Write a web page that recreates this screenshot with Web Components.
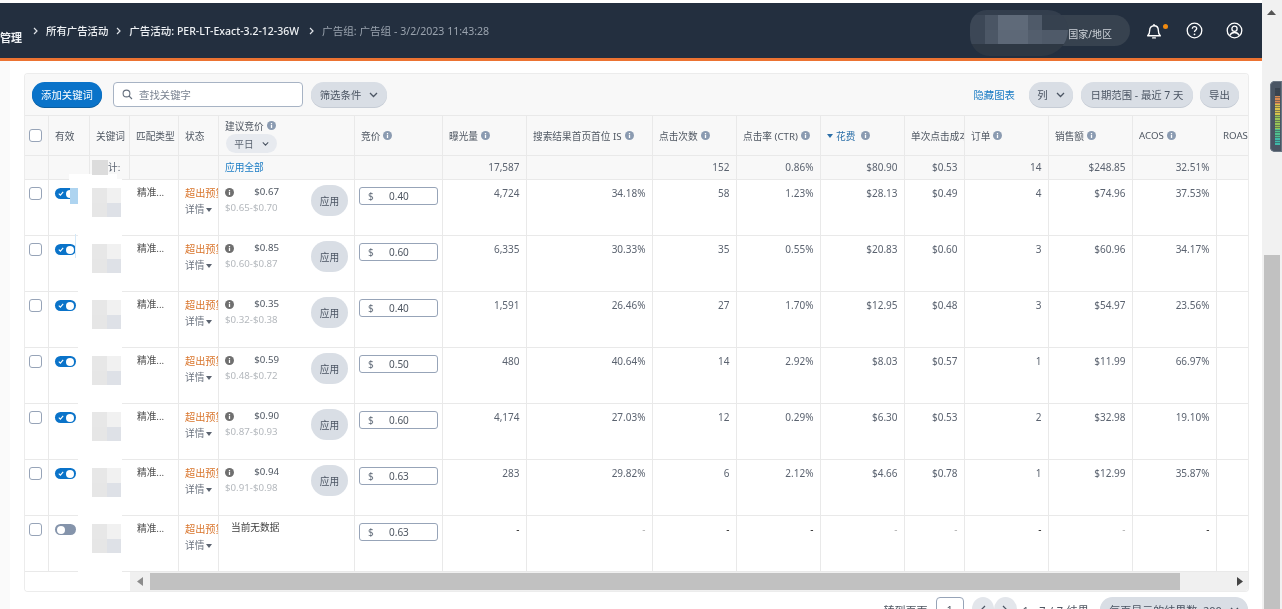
<!DOCTYPE html>
<html lang="zh"><head><meta charset="utf-8"><title>广告组</title>
<style>
html,body{margin:0;height:609px;overflow:hidden;background:#fff}
body{font:10px "Noto Sans","Noto Sans CJK SC",sans-serif;color:#555}
</style></head>
<body>
<app-shell>
  <top-bar></top-bar>
  <keyword-card></keyword-card>
  <pager-bar></pager-bar>
</app-shell>
<script>
const COLS='24px 41px 40px 49px 40px 136px 88px 84px 126px 84px 84px 84px 60px 84px 84px 84px 31px';
const INFO=(c='#8b9bb1',s=9)=>`<svg width="${s}" height="${s}" viewBox="0 0 10 10" style="flex:none"><circle cx="5" cy="5" r="5" fill="${c}"/><rect x="4.3" y="4.2" width="1.4" height="3.6" fill="#fff"/><rect x="4.3" y="2.2" width="1.4" height="1.3" fill="#fff"/></svg>`;
const CHEV=`<svg width="9" height="6" viewBox="0 0 9 6"><path d="M1 1l3.5 3.5L8 1" fill="none" stroke="#4b5563" stroke-width="1.3"/></svg>`;

class PillButton extends HTMLElement{constructor(){super();this.attachShadow({mode:'open'}).innerHTML=`<style>
:host{display:inline-flex;align-items:center;justify-content:center;gap:8px;height:25px;box-sizing:border-box;border-radius:13px;background:#d9dee5;color:#4b5563;font-size:10.4px;white-space:nowrap;box-shadow:0 1px 0 #c6ccd5}
:host([primary]){background:#0a73c9;color:#fff;box-shadow:0 1px 0 #0a5d9f}
</style><slot></slot>${this.hasAttribute('chev')?CHEV:''}`}}
customElements.define('pill-button',PillButton);

class ToggleSwitch extends HTMLElement{constructor(){super();const on=this.hasAttribute('on');this.attachShadow({mode:'open'}).innerHTML=`<style>
:host{display:flex;width:21px;height:11px;border-radius:6px;background:${on?'#0a73c9':'#8594ab'};box-sizing:border-box;padding:1.5px 2px;align-items:center;justify-content:${on?'flex-end':'flex-start'};position:relative;gap:0}
i{display:block;width:8px;height:8px;border-radius:50%;background:#fff}
svg{position:absolute;left:3px;top:3px}
</style>${on?'<svg width="6" height="5" viewBox="0 0 6 5"><path d="M.8 2.6l1.6 1.5L5.2.9" fill="none" stroke="#fff" stroke-width="1.1"/></svg>':''}<i></i>`}}
customElements.define('toggle-switch',ToggleSwitch);

class CheckBox extends HTMLElement{constructor(){super();this.attachShadow({mode:'open'}).innerHTML=`<style>:host{display:block;width:13px;height:13px;box-sizing:border-box;border:1px solid #97a4b8;border-radius:3px;background:#fff}</style>`}}
customElements.define('check-box',CheckBox);

class RedactBlob extends HTMLElement{constructor(){super();this.attachShadow({mode:'open'}).innerHTML=`<style>
:host{position:absolute;left:-12px;top:-1px;width:44px;height:57px;background:#fff;display:block}
div{position:absolute;left:14px;top:9px;width:29px;height:29px;display:grid;grid-template:1fr 1fr/1fr 1fr}
b:nth-child(1){background:#e7e7e7}b:nth-child(2){background:#f1f1f1}b:nth-child(3){background:#e6e6e6}b:nth-child(4){background:#dee1e7}
</style><div><b></b><b></b><b></b><b></b></div>`}}
customElements.define('redact-blob',RedactBlob);

const SEP=`<span class="s"><svg width="5" height="8" viewBox="0 0 5 8"><path d="M1 1l3 3-3 3" fill="none" stroke="#dfe3e8" stroke-width="1.2"/></svg></span>`;
const BLOB=[
'#333e4d','#333e4d','#333e4d','#333e4d','#333e4d',
'#3c4756','#4a5564','#5f6a79','#4f5a69','#36414f',
'#3c4756','#4c5766','#5d6877','#535e6d','#4f5a69',
'#2e3844','#2e3844','#2e3844','#2e3844','#2e3844'];
class TopBar extends HTMLElement{constructor(){super();this.attachShadow({mode:'open'}).innerHTML=`<style>
:host{display:flex;align-items:center;height:55px;margin-top:3px;background:#232f3f;border-bottom:3px solid #ec7332;color:#eef1f4;font-size:10.4px;font-weight:500;position:relative;white-space:nowrap}
.crumbs{display:flex;align-items:center;flex:none;height:100%}
.mg{font-size:11px;width:33px;padding-top:13px;font-weight:600}
.s{width:13px;display:flex}
.c{margin-right:8px}
.c2{margin-right:10px;font-size:10.5px}
.g{color:#9aa3ae;font-weight:400;font-size:10.6px}
.right{margin-left:auto;display:flex;align-items:center;height:100%}
.pill{display:flex;align-items:center;justify-content:flex-end;width:130px;height:31px;border-radius:16px;background:#37424f;box-sizing:border-box;padding:6px 18px 0 0;color:#cfd4da;font-size:10px;font-weight:400;margin-right:4px}
.ic{width:40px;display:flex;justify-content:center;position:relative}
.dot{position:absolute;left:29px;top:2px;width:5px;height:5px;border-radius:50%;background:#f08a10}
svg{display:block}
.blob{position:absolute;left:970px;top:7px;width:98px;height:46px;border-radius:22px 26px 34px 26px;overflow:hidden;display:grid;grid-template-columns:15px 13px 30px 14px 26px;grid-template-rows:5px 15px 14px 12px}
</style>
<div class="crumbs"><span class="mg">管理</span>
${SEP}<span class="c">所有广告活动</span>
${SEP}<span class="c c2">广告活动: PER-LT-Exact-3.2-12-36W</span>
${SEP}<span class="c g">广告组: 广告组 - 3/2/2023 11:43:28</span></div>
<div class="right">
<div class="pill">国家/地区</div>
<div class="ic"><svg width="18" height="18" viewBox="0 0 17 17"><path d="M2.500 13c1.400-1 1.900-2.200 1.900-5 0-2.600 1.700-4.500 4.100-4.500s4.100 1.900 4.100 4.500c0 2.800.5 4 1.900 5z" fill="none" stroke="#fff" stroke-width="1.300" stroke-linejoin="round"/><path d="M7.200 15h2.600" stroke="#fff" stroke-width="1.300" stroke-linecap="round"/><path d="M8.500 1.800v1.700" stroke="#fff" stroke-width="1.300"/></svg><span class="dot"></span></div>
<div class="ic"><svg width="17" height="17" viewBox="0 0 17 17"><circle cx="8.500" cy="8.500" r="7.300" fill="none" stroke="#fff" stroke-width="1.300"/><path d="M6.300 6.700c0-1.300 1-2.100 2.200-2.100s2.200.8 2.200 2c0 1.700-2.200 1.700-2.200 3.500" fill="none" stroke="#fff" stroke-width="1.300"/><circle cx="8.500" cy="12.300" r=".9" fill="#fff"/></svg></div>
<div class="ic"><svg width="17" height="17" viewBox="0 0 17 17"><circle cx="8.500" cy="8.500" r="7.300" fill="none" stroke="#fff" stroke-width="1.300"/><circle cx="8.500" cy="6.800" r="2.600" fill="none" stroke="#fff" stroke-width="1.300"/><path d="M3.800 13.500c.8-2 2.600-3 4.700-3s3.900 1 4.700 3" fill="none" stroke="#fff" stroke-width="1.300"/></svg></div>
<div style="width:8px"></div>
</div>
<div class="blob">${BLOB.map(c=>`<i style="background:${c}"></i>`).join('')}</div>`}}
customElements.define('top-bar',TopBar);

class KwToolbar extends HTMLElement{constructor(){super();this.attachShadow({mode:'open'}).innerHTML=`<style>
:host{display:flex;align-items:center;height:42px;padding:0 9px 0 7px;box-sizing:border-box;background:#f8f8f8;border-bottom:1px solid #e9e9e9}
.s{width:190px;height:25px;margin-left:11px;box-sizing:border-box;border:1px solid #a7b3c4;border-radius:4px;background:#fff;display:flex;align-items:center;padding-left:8px;gap:6px;color:#7a8391;font-size:10.4px}
.hide{margin-left:auto;color:#1b7cc4;font-size:10.4px;margin-right:14px}
</style>
<pill-button primary style="width:70px">添加关键词</pill-button>
<div class="s"><svg width="11" height="11" viewBox="0 0 11 11"><circle cx="4.500" cy="4.500" r="3.400" fill="none" stroke="#66707e" stroke-width="1.100"/><path d="M7 7l3 3" stroke="#66707e" stroke-width="1.100"/></svg>查找关键字</div>
<pill-button chev style="width:76px;margin-left:8px">筛选条件</pill-button>
<span class="hide">隐藏图表</span>
<pill-button chev style="width:44px">列</pill-button>
<pill-button style="width:112px;margin-left:8px">日期范围 - 最近 7 天</pill-button>
<pill-button style="width:39px;margin-left:7px">导出</pill-button>`}}
customElements.define('kw-toolbar',KwToolbar);

const BASE=`:host{display:grid;grid-template-columns:${COLS};box-sizing:border-box;border-bottom:1px solid #e9e9e9}
.c{border-right:1px solid #e9e9e9;box-sizing:border-box;overflow:hidden;white-space:nowrap;position:relative;min-width:0}
.c:last-child{border-right:0}
.r{text-align:right;padding:0 6.5px 0 0;font-size:10px}`;

class KwHeader extends HTMLElement{constructor(){super();
const h=(t)=>`<div class="c h"><span>${t}</span>${INFO()}</div>`;
this.attachShadow({mode:'open'}).innerHTML=`<style>${BASE}
:host{height:40px;background:#f8f8f8;font-size:9.7px;color:#4f5762}
.h{display:flex;align-items:center;gap:3px;padding-left:6px}
.cb{padding:13px 0 0 4px}
.sug{display:block;padding:2px 0 0 6px}
.sug div{display:flex;align-items:center;gap:3px;height:15px}
.sug .pick{width:51px;height:19px;margin:1px 0 0 1px;border-radius:10px;background:#e7eaef;justify-content:center;gap:8px;color:#5b6572}
.pick svg{width:7px}
.sort{color:#2c6fa8}
.sort svg:last-child{margin-left:3px}
</style>
<div class="c cb"><check-box></check-box></div>
<div class="c h">有效</div><div class="c h">关键词</div><div class="c h">匹配类型</div><div class="c h">状态</div>
<div class="c sug"><div>建议竞价 ${INFO()}</div><div class="pick">平日 ${CHEV}</div></div>
${h('竞价')}${h('曝光量')}${h('搜索结果首页首位 IS')}${h('点击次数')}${h('点击率 (CTR)')}
<div class="c h sort"><svg width="6" height="4" viewBox="0 0 6 4"><path d="M0 0h6L3 4z" fill="#2c6fa8"/></svg><span>花费</span>${INFO()}</div>
<div class="c h">单次点击成本</div>${h('订单')}${h('销售额')}${h('ACOS')}<div class="c h">ROAS</div>`}}
customElements.define('kw-header',KwHeader);

class KwTotal extends HTMLElement{constructor(){super();
const v=['17,587','','152','0.86%','$80.90','$0.53','14','$248.85','32.51%',''];
this.attachShadow({mode:'open'}).innerHTML=`<style>${BASE}
:host{height:24px;background:#f8f8f8;font-size:9.7px;color:#5b6370;line-height:23px}
.k{padding-left:18px;overflow:visible}
.k b{font-weight:400}
.bl{position:absolute;left:2px;top:4px;width:16px;height:15px;background:#dcdcdc}
.w{position:absolute;left:-21px;top:18px;width:48px;height:6px;background:#fff}
a{color:#1b7cc4;padding-left:6px}
</style>
<div class="c"></div><div class="c"></div>
<div class="c k"><span class="w"></span><span class="bl"></span><b>计:</b></div>
<div class="c"></div><div class="c"></div><div class="c"><a>应用全部</a></div><div class="c"></div>
${v.map(x=>`<div class="c r">${x}</div>`).join('')}`}}
customElements.define('kw-total',KwTotal);

class KwRow extends HTMLElement{constructor(){super();
const a=n=>this.getAttribute(n);
const vals=a('vals').split('|');
const on=this.hasAttribute('on');
const tint=a('tint');
const sug=a('sug')?`<div class="sg"><span class="in">${INFO('#6f6f6f',9)}<b>${a('sug')}</b></span><span class="rg">${a('range')}</span><pill-button class="ap">应用</pill-button></div>`:`<div class="nd">当前无数据</div>`;
this.attachShadow({mode:'open'}).innerHTML=`<style>${BASE}
:host{height:56px;background:#fff;font-size:9.7px;color:#5b6370}
.cb{padding:7px 0 0 4px}
.tg{padding:8px 0 0 6px;overflow:visible;z-index:0}
.k{overflow:visible;z-index:1;border-right-color:transparent}
.m{padding:6px 0 0 7px;color:#4d4d4d;line-height:14px}
.st{padding:6px 0 0 6px;line-height:14px;color:#d9752c;font-size:10.2px}
.st div{color:#6c7480;margin-top:3px;display:flex;align-items:center;gap:2px;font-size:9.7px}
.sg{position:relative;height:55px}
.in{position:absolute;left:6px;top:6px;width:54px;display:flex;justify-content:space-between;align-items:center;color:#4f5762;line-height:12px}
.in b{font-weight:400}
.rg{position:absolute;left:6px;top:22px;color:#b4b8bd;line-height:12px}
.ap{position:absolute;left:92px;top:5px;width:37px;height:31px;border-radius:16px;box-shadow:none;font-size:9.7px}
.nd{padding:6px 0 0 12px;color:#3f3f3f;line-height:12px}
.bid{margin:7px 0 0 4px;width:79px;height:18px;box-sizing:border-box;border:1px solid #97a4b8;border-radius:3px;background:#fff;display:flex;align-items:center;padding-left:8px;color:#4f5762;font-size:10px}
.bid span{width:21px;color:#67717e}
.r{line-height:14px;padding-top:6px}
.lite{color:#b0b0b0}
.dark{color:#222}
.blue{position:absolute;left:21px;top:8px;width:8px;height:16px;background:#aed4f0}
.blue.t{left:26px;width:1px;top:-2px;height:24px;background:#d4e8f7}
</style>
<div class="c cb"><check-box></check-box></div>
<div class="c tg"><toggle-switch ${on?'on':''}></toggle-switch>${tint==='1'?'<span class="blue"></span>':tint==='2'?'<span class="blue t"></span>':''}</div>
<div class="c k"><redact-blob></redact-blob></div>
<div class="c m">精准...</div>
<div class="c st">超出预算<div>详情<svg width="6" height="4" viewBox="0 0 6 4"><path d="M0 0h6L3 4z" fill="#5b6370"/></svg></div></div>
<div class="c">${sug}</div>
<div class="c"><div class="bid"><span>$</span>${a('bid')}</div></div>
${vals.map((x,i)=>`<div class="c r ${x==='-'?([0,2,3,6,8].includes(i)?'dark':'lite'):''}">${x}</div>`).join('')}<div class="c"></div>`}}
customElements.define('kw-row',KwRow);

class HScroll extends HTMLElement{constructor(){super();this.attachShadow({mode:'open'}).innerHTML=`<style>
:host{display:grid;grid-template-columns:105px 1fr;height:19px;background:#fff}
.t{background:#f0f0f0;position:relative}
.th{position:absolute;left:20px;top:1px;bottom:1px;width:1030px;background:#c1c1c1}
svg{position:absolute;top:5px}
</style><div></div><div class="t"><svg style="left:7px" width="6" height="9" viewBox="0 0 6 9"><path d="M6 0v9L0 4.500z" fill="#8c8c8c"/></svg><div class="th"></div><svg style="right:5px" width="6" height="9" viewBox="0 0 6 9"><path d="M0 0v9l6-4.500z" fill="#444"/></svg></div>`}}
customElements.define('h-scroll',HScroll);

class KeywordCard extends HTMLElement{constructor(){super();
const rows=[
['0.67','$0.65-$0.70','0.40','4,724|34.18%|58|1.23%|$28.13|$0.49|4|$74.96|37.53%',1,1],
['0.85','$0.60-$0.87','0.60','6,335|30.33%|35|0.55%|$20.83|$0.60|3|$60.96|34.17%',1,2],
['0.35','$0.32-$0.38','0.40','1,591|26.46%|27|1.70%|$12.95|$0.48|3|$54.97|23.56%',1,0],
['0.59','$0.48-$0.72','0.50','480|40.64%|14|2.92%|$8.03|$0.57|1|$11.99|66.97%',1,0],
['0.90','$0.87-$0.93','0.60','4,174|27.03%|12|0.29%|$6.30|$0.53|2|$32.98|19.10%',1,0],
['0.94','$0.91-$0.98','0.63','283|29.82%|6|2.12%|$4.66|$0.78|1|$12.99|35.87%',1,0],
['','','0.63','-|-|-|-|-|-|-|-|-',0,0]];
this.attachShadow({mode:'open'}).innerHTML=`<style>
:host{display:block;width:1223px;margin:13px 0 0 25px;box-sizing:border-box;height:517px;box-shadow:0 0 0 1px #ececec;border-radius:3px;overflow:hidden;background:#fff}
</style><kw-toolbar></kw-toolbar><kw-header></kw-header><kw-total></kw-total>
${rows.map(r=>`<kw-row ${r[4]?'on':''} tint="${r[5]}" ${r[0]?`sug="$${r[0]}" range="${r[1]}"`:''} bid="${r[2]}" vals="${r[3]}"></kw-row>`).join('')}
<h-scroll></h-scroll>`}}
customElements.define('keyword-card',KeywordCard);

class PagerBar extends HTMLElement{constructor(){super();this.attachShadow({mode:'open'}).innerHTML=`<style>
:host{display:flex;align-items:center;justify-content:flex-end;height:25px;margin:6px 14px 0 0;font-size:11px;color:#4f5762;white-space:nowrap}
.i{width:28px;height:25px;box-sizing:border-box;border:1px solid #97a4b8;border-radius:4px;background:#fff;display:flex;align-items:center;justify-content:center;margin:0 8px}
.n{width:22.5px;height:25px;border-radius:50%;background:#e3e6eb;display:flex;align-items:center;justify-content:center}
.t{margin:0 11px 0 6px;letter-spacing:.3px}
pill-button{font-size:11px}
</style><span>转到页面</span><div class="i">1</div>
<div class="n"><svg width="6" height="9" viewBox="0 0 6 9"><path d="M5 1L1.500 4.500 5 8" fill="none" stroke="#4b5563" stroke-width="1.200"/></svg></div>
<div class="n"><svg width="6" height="9" viewBox="0 0 6 9"><path d="M1 1l3.500 3.500L1 8" fill="none" stroke="#4b5563" stroke-width="1.200"/></svg></div>
<span class="t">1 - 7 / 7 结果</span><pill-button chev style="width:148px">每页显示的结果数: 200</pill-button>`}}
customElements.define('pager-bar',PagerBar);

class PageScroll extends HTMLElement{constructor(){super();this.attachShadow({mode:'open'}).innerHTML=`<style>
:host{display:block;background:#f1f1f1;height:609px;position:relative}
svg{position:absolute;left:5px;top:10px}
.th{position:absolute;left:2px;right:2px;top:255px;bottom:0;background:#c1c1c1}
.w{position:absolute;left:8px;right:0;top:81px;height:71px;background:#4a5563;border-radius:5px 0 0 5px;box-shadow:inset 0 0 0 1px #6b7683}
.m{position:absolute;left:5px;right:2px;top:7px;bottom:7px;background:repeating-linear-gradient(180deg,transparent 0 1.5px,rgba(60,70,80,.55) 1.5px 2.5px),linear-gradient(180deg,#39434f 0 14%,#d98a52 14% 28%,#d8c24b 28% 48%,#98c456 48% 72%,#4fbf8e 72% 88%,#3fb8a8 88%)}
</style><svg width="9" height="5" viewBox="0 0 9 5"><path d="M0 5L4.500 0 9 5z" fill="#555"/></svg><div class="th"></div><div class="w"><div class="m"></div></div>`}}
customElements.define('page-scroll',PageScroll);

class AppShell extends HTMLElement{constructor(){super();this.attachShadow({mode:'open'}).innerHTML=`<style>
:host{display:grid;grid-template-columns:1262px 20px;height:609px;overflow:hidden;filter:blur(.35px)}
main{height:609px;overflow:hidden;background:linear-gradient(90deg,#fafafa 0 10px,#fff 10px);display:block}
</style><main><slot></slot></main><page-scroll></page-scroll>`}}
customElements.define('app-shell',AppShell);
</script>
</body></html>
